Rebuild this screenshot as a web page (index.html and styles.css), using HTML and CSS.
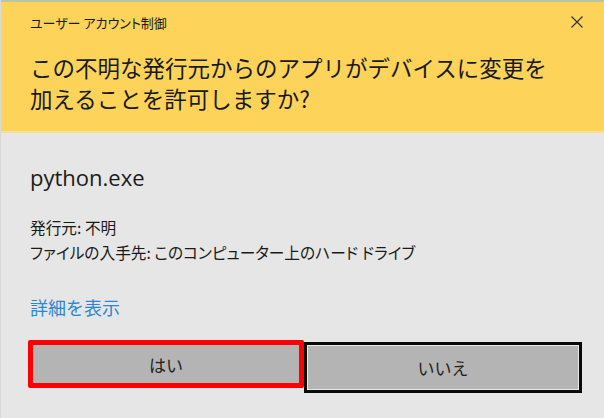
FILE: index.html
```html
<!DOCTYPE html>
<html lang="ja">
<head>
<meta charset="utf-8">
<link rel="stylesheet" href="styles.css">
</head>
<body>
<div class="dialog">
  <header class="head">
    <div class="head-top">
      <span class="caption">ユーザー アカウント制御</span>
      <span class="close" aria-label="閉じる">
        <svg width="14" height="14" viewBox="0 0 14 14"><path d="M1.5 1.5 L12.5 12.5 M12.5 1.5 L1.5 12.5" stroke="#333" stroke-width="1.2" fill="none"/></svg>
      </span>
    </div>
    <h1 class="question">この不明な発行元からのアプリがデバイスに変更を<br>加えることを許可しますか?</h1>
  </header>
  <main class="content">
    <div class="app-name">python.exe</div>
    <div class="info">
      <div>発行元: 不明</div>
      <div>ファイルの入手先: このコンピューター上のハード ドライブ</div>
    </div>
    <a class="details" href="#">詳細を表示</a>
    <div class="buttons">
      <button class="btn btn-yes">はい</button>
      <button class="btn btn-no">いいえ</button>
    </div>
  </main>
</div>
</body>
</html>
```
FILE: styles.css
```css
* { box-sizing: border-box; }
html, body { margin: 0; padding: 0; }
body {
  width: 604px;
  height: 418px;
  overflow: hidden;
  background: #e6e6e6;
  font-family: "Noto Sans CJK JP", "Noto Sans", sans-serif;
  color: #1a1a1a;
}
.dialog {
  width: 604px;
  height: 418px;
  background: #e6e6e6;
  border-left: 1px solid #d9d9d9;
}
.head {
  background: #fdd35a;
  border-top: 2px solid #bcc6a6;
  border-bottom: 2px solid #f5df92;
  height: 133px;
  padding: 8px 0 0 29px;
}
.head-top {
  display: flex;
  justify-content: space-between;
  align-items: center;
  height: 24px;
  padding-right: 20px;
}
.caption {
  font-size: 13px;
  font-feature-settings: "palt";
  color: #1a1a1a;
}
.close { display: flex; width: 14px; height: 14px; }
.question {
  margin: 18px 0 0;
  font-size: 22.5px;
  font-weight: normal;
  line-height: 31px;
  color: #1a1a1a;
}
.content {
  padding: 0 0 0 29px;
}
.app-name {
  margin-top: 30px;
  font-family: "Open Sans", "Noto Sans", sans-serif;
  font-size: 22px;
  line-height: 28px;
}
.info {
  margin-top: 24px;
  font-size: 15.7px;
  line-height: 25px;
  font-feature-settings: "palt";
}
.details {
  display: inline-block;
  margin-top: 30px;
  font-size: 18px;
  line-height: 24px;
  color: #2d86d2;
  text-decoration: none;
}
.buttons {
  display: flex;
  align-items: flex-start;
  margin-top: 20px;
  margin-left: -2px;
}
.btn {
  font-family: "Noto Sans CJK JP", sans-serif;
  font-size: 17px;
  color: #222;
  background: #b4b4b4;
  padding: 0;
  margin: 0;
}
.btn-yes {
  width: 276px;
  height: 48px;
  border: 5px solid #ff0000;
  border-radius: 2px;
}
.btn-no {
  width: 278px;
  height: 51px;
  margin-top: 2px;
  border: 3px solid #0a0a0a;
  box-shadow: inset 0 0 0 1px #e8e8e8;
}
```
